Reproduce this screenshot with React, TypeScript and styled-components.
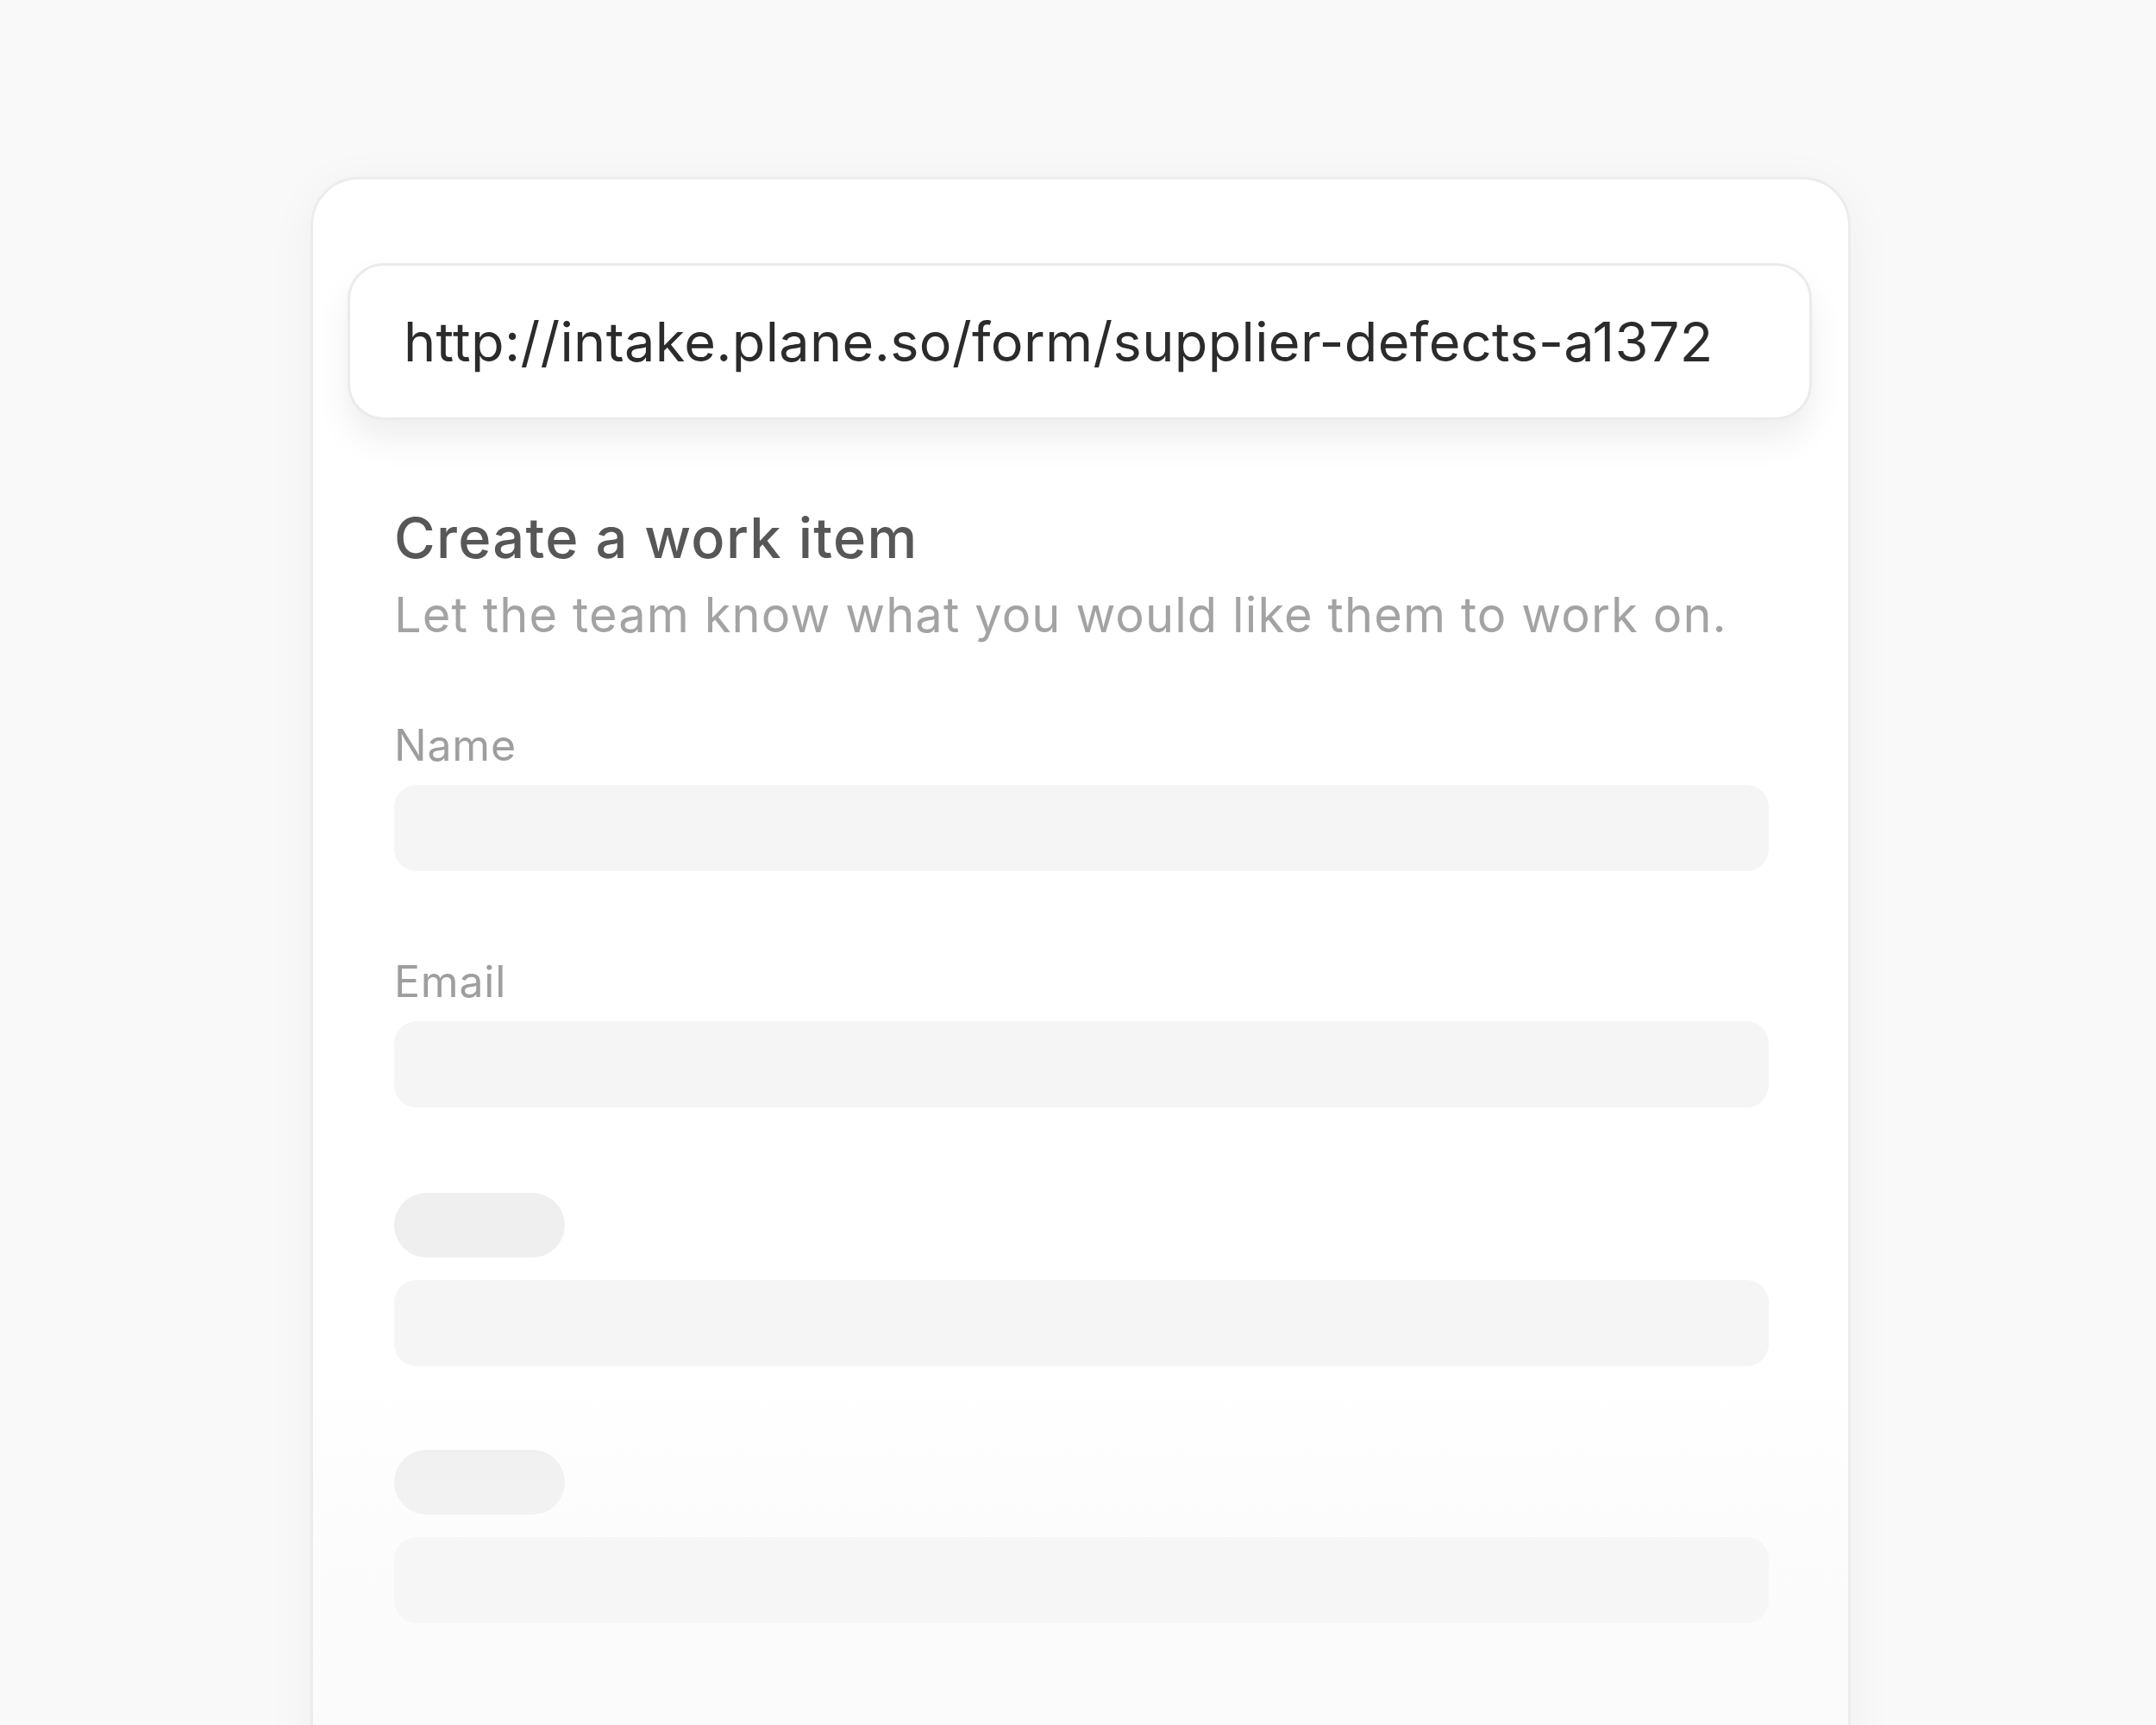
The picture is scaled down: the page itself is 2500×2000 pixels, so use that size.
import React from "react";
import styled, { createGlobalStyle } from "styled-components";

const Global = createGlobalStyle`
  html, body { margin: 0; padding: 0; background: #f9f9f9; }
  body { font-family: Inter, "Noto Sans", sans-serif; -webkit-font-smoothing: antialiased; }
  #root { min-height: 2000px; }
`;

const Page = styled.div`
  height: 2000px;
  overflow: hidden;
  padding: 205px 355px 0 360px;
  box-sizing: border-box;
`;

const Card = styled.div`
  position: relative;
  width: 1786px;
  height: 1900px;
  box-sizing: border-box;
  background: #ffffff;
  border: 3px solid #ececec;
  border-radius: 56px;
  box-shadow: 0 10px 60px rgba(0, 0, 0, 0.045);
  padding: 97px 42px 0 40px;
  display: flex;
  flex-direction: column;
`;

const UrlBar = styled.div`
  height: 182px;
  box-sizing: border-box;
  border: 3px solid #ebebeb;
  border-radius: 42px;
  background: #ffffff;
  box-shadow: 0 22px 40px rgba(0, 0, 0, 0.07);
  display: flex;
  align-items: center;
  padding-left: 62px;
  font-size: 63px;
  color: #2b2b2b;
  letter-spacing: 0.35px;
`;

const Form = styled.div`
  display: flex;
  flex-direction: column;
  padding: 0 50px 0 54px;
`;

const Title = styled.h1`
  margin: 99px 0 0;
  font-size: 65px;
  line-height: 76px;
  font-weight: 500;
  color: #575757;
  letter-spacing: 1.3px;
`;

const Subtitle = styled.p`
  margin: 17px 0 0;
  font-size: 56px;
  line-height: 68px;
  font-weight: 400;
  color: #a3a3a3;
  letter-spacing: 1.1px;
`;

const Field = styled.div<{ $top: number }>`
  display: flex;
  flex-direction: column;
  gap: 16px;
  margin-top: ${(p) => p.$top}px;
`;

const PillField = styled(Field)`
  gap: 26px;
`;

const Label = styled.div`
  font-size: 50px;
  line-height: 60px;
  color: #9e9e9e;
  letter-spacing: 0.8px;
`;

const LabelPill = styled.div`
  width: 198px;
  height: 75px;
  border-radius: 38px;
  background: #efefef;
`;

const Input = styled.div`
  height: 100px;
  border-radius: 26px;
  background: #f5f5f5;
`;

const Fade = styled.div`
  position: absolute;
  left: 0;
  right: 0;
  bottom: 0;
  height: 520px;
  border-radius: 0 0 53px 53px;
  background: linear-gradient(
    to bottom,
    rgba(248, 248, 248, 0) 0%,
    rgba(248, 248, 248, 0.45) 45%,
    rgba(248, 248, 248, 0.6) 100%
  );
  pointer-events: none;
`;

export default function App() {
  return (
    <>
      <Global />
      <Page>
        <Card>
          <UrlBar>http://intake.plane.so/form/supplier-defects-a1372</UrlBar>
          <Form>
            <Title>Create a work item</Title>
            <Subtitle>Let the team know what you would like them to work on.</Subtitle>
            <Field $top={87}>
              <Label>Name</Label>
              <Input />
            </Field>
            <Field $top={98}>
              <Label>Email</Label>
              <Input />
            </Field>
            <PillField $top={99}>
              <LabelPill />
              <Input />
            </PillField>
            <PillField $top={97}>
              <LabelPill />
              <Input />
            </PillField>
          </Form>
          <Fade />
        </Card>
      </Page>
    </>
  );
}
